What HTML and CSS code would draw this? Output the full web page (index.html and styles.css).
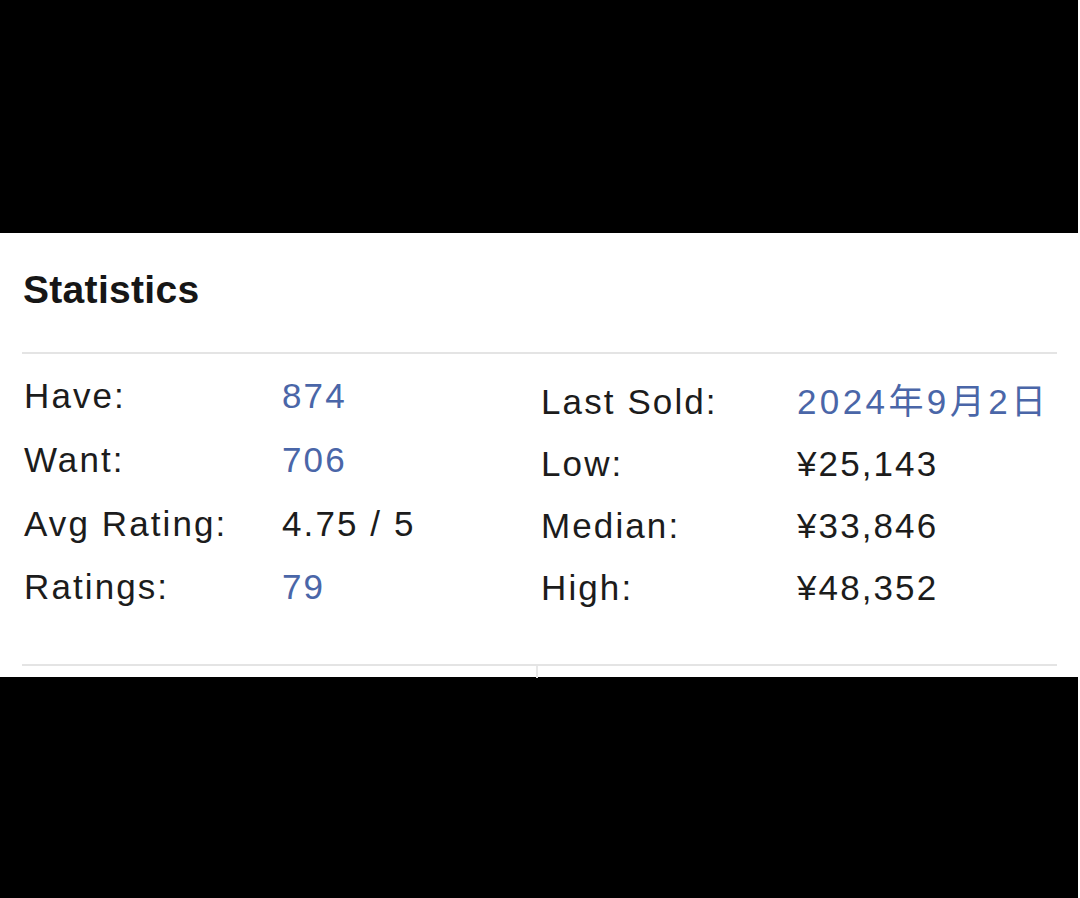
FILE: index.html
```html
<!DOCTYPE html>
<html lang="en">
<head>
<meta charset="utf-8">
<title>Statistics</title>
<link rel="stylesheet" href="styles.css">
</head>
<body>
<div class="band band-top"></div>
<section class="panel">
  <h2 class="title">Statistics</h2>
  <div class="divider"></div>
  <div class="stats">
    <dl class="col col-left">
      <dt>Have:</dt><dd class="link">874</dd>
      <dt>Want:</dt><dd class="link">706</dd>
      <dt>Avg Rating:</dt><dd>4.75 / 5</dd>
      <dt>Ratings:</dt><dd class="link">79</dd>
    </dl>
    <dl class="col col-right">
      <dt>Last Sold:</dt><dd class="link date">2024年9月2日</dd>
      <dt>Low:</dt><dd>¥25,143</dd>
      <dt>Median:</dt><dd>¥33,846</dd>
      <dt>High:</dt><dd>¥48,352</dd>
    </dl>
  </div>
  <div class="foot">
    <div class="foot-cell"></div>
    <div class="foot-cell foot-cell-right"></div>
  </div>
</section>
<div class="band band-bottom"></div>
</body>
</html>
```

FILE: styles.css
```css
html, body {
  margin: 0;
  padding: 0;
  background: #ffffff;
}
body {
  width: 1080px;
  height: 898px;
  overflow: hidden;
  font-family: "Liberation Sans", Arial, "Noto Sans CJK JP", sans-serif;
  color: #1c1c1c;
}
.band {
  width: 1078px;
  background: #000000;
}
.band-top {
  height: 233px;
}
.band-bottom {
  height: 221px;
}
.panel {
  height: 444px;
  box-sizing: border-box;
  padding: 37px 23px 0 24px;
  background: #ffffff;
}
.title {
  margin: 0;
  font-size: 39px;
  line-height: 39px;
  font-weight: 700;
  color: #161616;
  margin-left: -1px;
  letter-spacing: 0.3px;
}
.divider {
  height: 2px;
  background: #e4e4e4;
  margin: 43px 0 0 -2px;
}
.stats {
  display: flex;
  margin-top: 10px;
}
.col {
  margin: 0;
  display: grid;
  font-size: 35px;
  letter-spacing: 2.1px;
}
.col dt, .col dd {
  margin: 0;
  white-space: nowrap;
}
.col-left {
  width: 517px;
  grid-template-columns: 258px auto;
  line-height: 63px;
}
.col-right {
  grid-template-columns: 256px auto;
  line-height: 62px;
  padding-top: 7px;
}
.date {
  letter-spacing: 3.4px;
}
.link {
  color: #4a66a8;
}
.foot {
  display: flex;
  margin: 45px 0 0 -2px;
  border-top: 2px solid #e4e4e4;
  height: 12px;
}
.foot-cell {
  width: 514px;
  border-right: 2px solid #e8e8e8;
}
.foot-cell-right {
  border-right: 0;
}
```
